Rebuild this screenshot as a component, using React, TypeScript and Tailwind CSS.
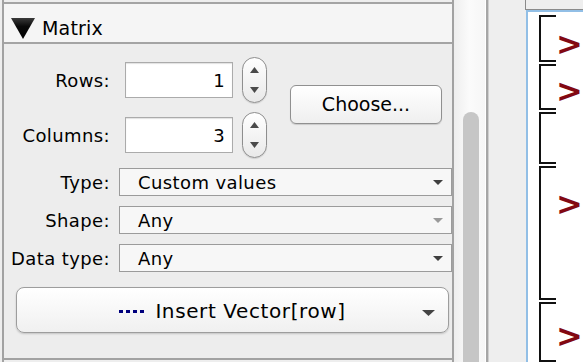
import React from "react"

function Arrow({ up = false, color = "#4a4a4a", w = 9, h = 6 }: { up?: boolean; color?: string; w?: number; h?: number }) {
  return (
    <svg width={w} height={h} viewBox={`0 0 ${w} ${h}`}>
      <polygon points={up ? `0,${h} ${w},${h} ${w / 2},0` : `0,0 ${w},0 ${w / 2},${h}`} fill={color} />
    </svg>
  )
}

function Spinner() {
  return (
    <div className="flex h-[46px] w-[25px] flex-col rounded-full border border-[#8e8e8e] bg-gradient-to-b from-white via-[#f4f4f4] to-[#e9e9e9] shadow-[0_1px_1px_rgba(0,0,0,0.12)]">
      <div className="flex flex-1 items-center justify-center pt-[2px]">
        <Arrow up />
      </div>
      <div className="flex flex-1 items-center justify-center pb-[2px]">
        <Arrow />
      </div>
    </div>
  )
}

function NumberRow({ label, value }: { label: string; value: string }) {
  return (
    <div className="flex h-[46px] items-center">
      <div className="w-[106px] text-right">{label}</div>
      <div className="ml-[15px] flex h-[36px] w-[108px] items-center justify-end border border-[#ababab] bg-white pr-[7px] shadow-[inset_0_1px_1px_rgba(0,0,0,0.12)]">
        {value}
      </div>
      <div className="ml-[9px]">
        <Spinner />
      </div>
    </div>
  )
}

function Combo({ label, value, arrow = "#3f3f3f" }: { label: string; value: string; arrow?: string }) {
  return (
    <div className="flex h-[28px] items-center">
      <div className="w-[106px] text-right">{label}</div>
      <div className="ml-[9px] flex h-[28px] flex-1 items-center justify-between border border-[#9b9b9b] bg-[#f7f7f7] pl-[18px] pr-[8px]">
        <span>{value}</span>
        <Arrow color={arrow} w={10} h={5} />
      </div>
    </div>
  )
}

const blocks = [
  { h: 47, pt: 17, prompt: true },
  { h: 46, pt: 15, prompt: true },
  { h: 52, pt: 0, prompt: false },
  { h: 134, pt: 26, prompt: true },
  { h: 60, pt: 22, prompt: true },
]

function Bracket({ h, pt, prompt }: { h: number; pt: number; prompt: boolean }) {
  return (
    <div className="flex shrink-0" style={{ height: h }}>
      <div className="flex w-[17px] flex-col justify-between border-l-2 border-[#111]">
        <div className="h-[2px] bg-[#111]" />
        <div className="h-[2px] bg-[#111]" />
      </div>
      {prompt && (
        <div style={{ paddingTop: pt }}>
          <span className="block font-['DejaVu_Sans',sans-serif] text-[32px] font-bold leading-[24px] tracking-normal text-[#820812]">
            &gt;
          </span>
        </div>
      )}
    </div>
  )
}

export default function App() {
  return (
    <div className="flex h-[362px] w-[583px] overflow-hidden bg-[#eeeeee] pl-[2px] font-['DejaVu_Sans',sans-serif] text-[18px] tracking-[0.4px] text-black">
      {/* left panel */}
      <div className="flex w-[452px] shrink-0 flex-col border-l-2 border-r-2 border-[#a2a2a2]">
        <div className="h-[2px]" />
        <div className="flex h-[42px] items-center border-y-2 border-[#a4a4a4] bg-[#f5f5f5] pl-[7px] pt-[11px]">
          <svg width="24" height="21" viewBox="0 0 24 21">
            <defs>
              <linearGradient id="tri" x1="0" y1="0" x2="0" y2="1">
                <stop offset="0" stopColor="#3a3a3a" />
                <stop offset="0.4" stopColor="#0a0a0a" />
                <stop offset="1" stopColor="#000" />
              </linearGradient>
            </defs>
            <polygon points="0,0 24,0 12,21" fill="url(#tri)" />
          </svg>
          <span className="ml-[7px] text-[19px] tracking-[0.2px]">Matrix</span>
        </div>
        <div className="flex flex-1 flex-col border-b-2 border-[#a2a2a2] bg-[#ededed] pt-[13px]">
          <div className="flex">
            <div className="flex flex-col gap-[9px]">
              <NumberRow label="Rows:" value="1" />
              <NumberRow label="Columns:" value="3" />
            </div>
            <div className="ml-[23px] mt-[28px] flex h-[39px] w-[152px] items-center justify-center rounded-[6px] border border-[#909090] bg-gradient-to-b from-white to-[#efefef] text-[19px] tracking-normal shadow-[0_1px_1px_rgba(0,0,0,0.15)]">
              Choose...
            </div>
          </div>
          <div className="mt-[10px] flex flex-col gap-[10px]">
            <Combo label="Type:" value="Custom values" />
            <Combo label="Shape:" value="Any" arrow="#9a9a9a" />
            <Combo label="Data type:" value="Any" />
          </div>
          <div className="ml-[12px] mt-[15px] grid h-[46px] w-[433px] grid-cols-[1fr_auto_1fr] items-center rounded-[8px] border border-[#9d9d9d] bg-gradient-to-b from-white to-[#f0f0f0] text-[20px] tracking-[0.6px] shadow-[0_1px_2px_rgba(0,0,0,0.18)]">
            <div />
            <div className="flex items-center pt-[2px]">
              <div className="flex gap-[3px]">
                <div className="h-[3px] w-[4px] bg-[#00007d]" />
                <div className="h-[3px] w-[4px] bg-[#00007d]" />
                <div className="h-[3px] w-[4px] bg-[#00007d]" />
                <div className="h-[3px] w-[4px] bg-[#00007d]" />
              </div>
              <span className="ml-[11px]">Insert Vector[row]</span>
            </div>
            <div className="flex justify-end pr-[13px] pt-[6px]">
              <Arrow color="#444" w={13} h={6} />
            </div>
          </div>
        </div>
        <div className="h-[2px]" />
      </div>

      {/* scroll bar */}
      <div className="flex w-[31px] shrink-0 bg-gradient-to-r from-[#eeeeee] via-[#fbfbfb] to-[#f6f6f6]">
        <div className="ml-[9px] mt-[112px] w-[16px] rounded-t-full bg-[#c6c6c6]" />
      </div>
      <div className="w-[1px] bg-white" />
      <div className="w-[2px] bg-[#a6a6a6]" />
      <div className="w-[1px] bg-[#cfcfcf]" />
      <div className="w-[36px] bg-[#eeeeee]" />

      {/* worksheet */}
      <div className="flex flex-1 flex-col">
        <div className="h-[20px] border-b border-l border-[#8a8a8a] bg-[#eeeeee]" />
        <div className="ml-[1px] flex flex-1 flex-col border-l-2 border-t-2 border-[#92bfe6] bg-white pl-[11px] pt-[3px]">
          <div className="flex flex-col gap-[2px]">
            {blocks.map((b, i) => (
              <Bracket key={i} {...b} />
            ))}
          </div>
        </div>
      </div>
    </div>
  )
}
